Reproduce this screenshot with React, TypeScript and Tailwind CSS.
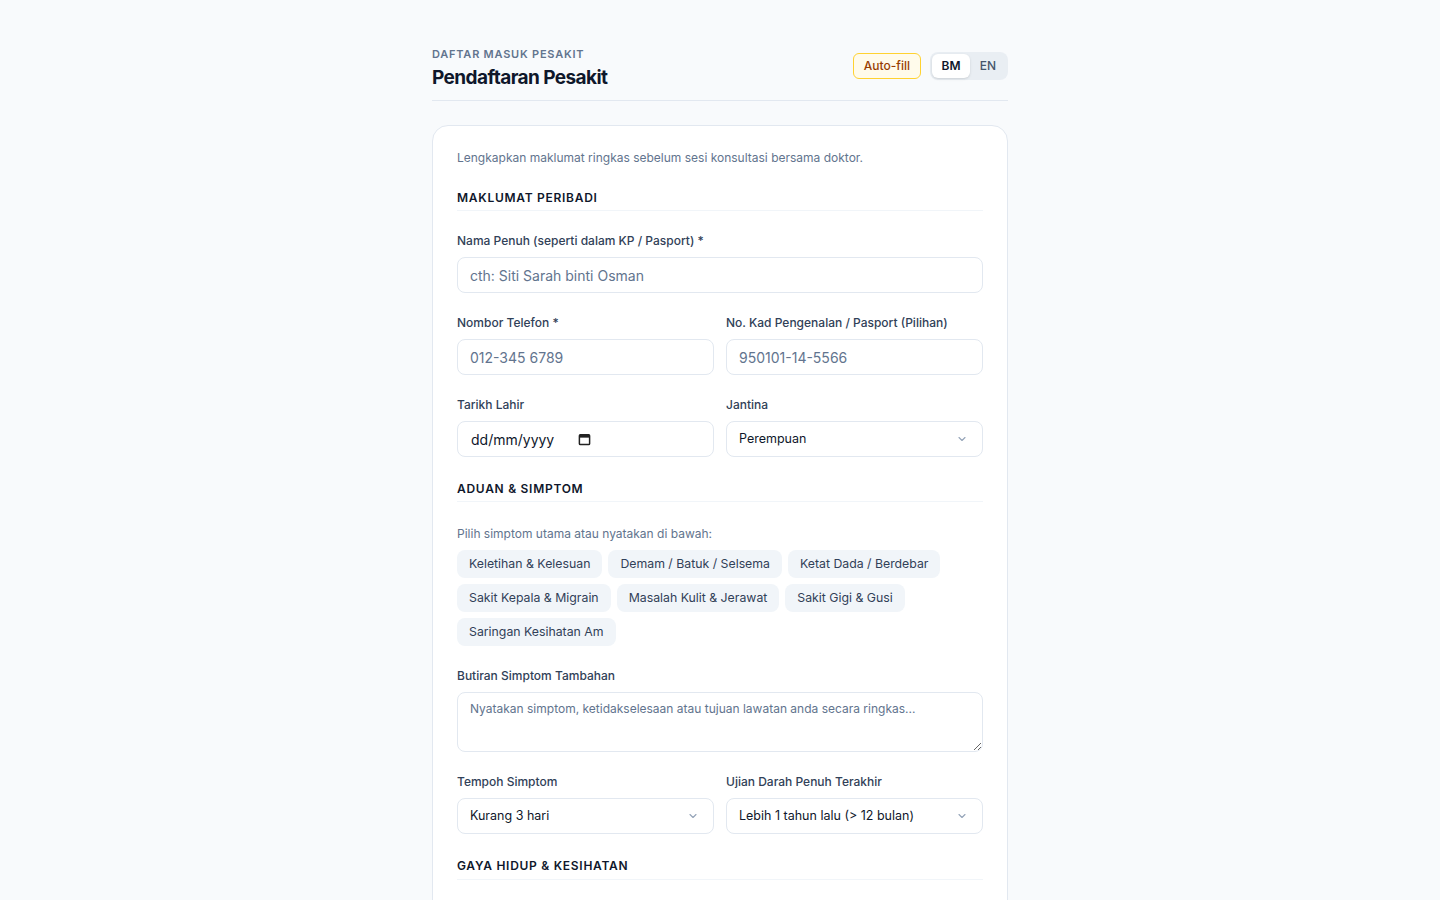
import React from "react";

const font = { fontFamily: "Inter, 'Noto Sans', sans-serif" };

function Label({ children }: { children: React.ReactNode }) {
  return <label className="block text-[12px] leading-4 font-medium text-slate-700 mb-2">{children}</label>;
}

function TextInput({ placeholder }: { placeholder: string }) {
  return (
    <input
      type="text"
      placeholder={placeholder}
      className="block w-full h-9 rounded-lg border border-slate-200 bg-white px-3 text-[14px] text-slate-900 placeholder:text-slate-500 outline-none"
      style={font}
    />
  );
}

function Chevron() {
  return (
    <svg className="pointer-events-none absolute right-[15px] top-1/2 -translate-y-1/2" width="12" height="12" viewBox="0 0 24 24" fill="none" stroke="#94a3b8" strokeWidth="2.2" strokeLinecap="round" strokeLinejoin="round">
      <path d="M6 9l6 6 6-6" />
    </svg>
  );
}

function Select({ value, options }: { value: string; options: string[] }) {
  return (
    <div className="relative">
      <select
        defaultValue={value}
        className="block w-full h-9 appearance-none rounded-lg border border-slate-200 bg-white pl-3 pr-8 text-[12.5px] text-slate-900 outline-none"
        style={font}
      >
        {options.map((o) => (
          <option key={o}>{o}</option>
        ))}
      </select>
      <Chevron />
    </div>
  );
}

function SectionTitle({ children }: { children: React.ReactNode }) {
  return (
    <div className="border-b border-slate-100 pb-[4px] text-[12px] leading-4 font-semibold tracking-[0.06em] text-slate-900 uppercase">
      {children}
    </div>
  );
}

const chips = [
  "Keletihan & Kelesuan",
  "Demam / Batuk / Selsema",
  "Ketat Dada / Berdebar",
  "Sakit Kepala & Migrain",
  "Masalah Kulit & Jerawat",
  "Sakit Gigi & Gusi",
  "Saringan Kesihatan Am",
];

export default function App() {
  return (
    <div className="min-h-screen bg-slate-50" style={font}>
      <div className="mx-auto w-[576px] pt-[46px] pb-16">
        <header className="flex items-start justify-between border-b border-slate-200 pb-2">
          <div>
            <div className="text-[11px] leading-4 font-semibold tracking-[0.07em] text-slate-500 uppercase">Daftar Masuk Pesakit</div>
            <h1 className="mt-0.5 text-[19px] leading-7 font-bold tracking-[-0.03em] text-slate-900">Pendaftaran Pesakit</h1>
          </div>
          <div className="mt-[6px] flex items-center gap-[9px]">
            <button className="h-[26px] rounded-md border border-amber-300 bg-amber-50 px-[10px] text-[12px] font-medium text-amber-800">Auto-fill</button>
            <div className="flex rounded-lg bg-slate-200/70 p-[2px]">
              <button className="h-6 w-[38px] rounded-md bg-white text-[12px] font-semibold text-slate-900 shadow-sm">BM</button>
              <button className="h-6 w-[36px] rounded-md text-[12px] font-medium text-slate-600">EN</button>
            </div>
          </div>
        </header>

        <main className="mt-6 rounded-2xl border border-slate-200 bg-white p-6">
          <p className="text-[12px] leading-4 text-slate-500">Lengkapkan maklumat ringkas sebelum sesi konsultasi bersama doktor.</p>

          <section className="mt-6">
            <SectionTitle>Maklumat Peribadi</SectionTitle>
            <div className="mt-[22px]">
              <Label>Nama Penuh (seperti dalam KP / Pasport) *</Label>
              <TextInput placeholder="cth: Siti Sarah binti Osman" />
            </div>
            <div className="mt-[22px] grid grid-cols-2 gap-3">
              <div>
                <Label>Nombor Telefon *</Label>
                <TextInput placeholder="012-345 6789" />
              </div>
              <div>
                <Label>No. Kad Pengenalan / Pasport (Pilihan)</Label>
                <TextInput placeholder="950101-14-5566" />
              </div>
            </div>
            <div className="mt-[22px] grid grid-cols-2 gap-3">
              <div>
                <Label>Tarikh Lahir</Label>
                <div className="flex h-9 items-center rounded-lg border border-slate-200 bg-white px-[13px] text-[14px] text-slate-900">
                  <span>dd/mm/yyyy</span>
                  <svg className="ml-[24px]" width="13" height="13" viewBox="0 0 14 14">
                    <rect x="1.5" y="2" width="11" height="10.5" rx="1" fill="none" stroke="#222" strokeWidth="1.6" />
                    <rect x="1.5" y="2" width="11" height="3" fill="#222" />
                  </svg>
                </div>
              </div>
              <div>
                <Label>Jantina</Label>
                <Select value="Perempuan" options={["Lelaki", "Perempuan"]} />
              </div>
            </div>
          </section>

          <section className="mt-[24px]">
            <SectionTitle>Aduan &amp; Simptom</SectionTitle>
            <p className="mt-6 text-[12px] leading-4 text-slate-500">Pilih simptom utama atau nyatakan di bawah:</p>
            <div className="mt-[8px] flex flex-wrap gap-x-[6px] gap-y-[6px]">
              {chips.map((c) => (
                <button key={c} className="h-7 rounded-lg bg-slate-100 px-3 text-[12.3px] font-normal text-slate-700">
                  {c}
                </button>
              ))}
            </div>
            <div className="mt-[22px]">
              <Label>Butiran Simptom Tambahan</Label>
              <textarea
                rows={2}
                placeholder="Nyatakan simptom, ketidakselesaan atau tujuan lawatan anda secara ringkas..."
                className="block h-[60px] w-full rounded-lg border border-slate-200 bg-white px-3 py-[8px] text-[12px] leading-4 text-slate-900 placeholder:text-slate-500 outline-none"
                style={font}
              />
            </div>
            <div className="mt-[22px] grid grid-cols-2 gap-3">
              <div>
                <Label>Tempoh Simptom</Label>
                <Select value="Kurang 3 hari" options={["Kurang 3 hari", "3 - 7 hari", "Lebih 1 minggu"]} />
              </div>
              <div>
                <Label>Ujian Darah Penuh Terakhir</Label>
                <Select
                  value="Lebih 1 tahun lalu (> 12 bulan)"
                  options={["Kurang 6 bulan", "6 - 12 bulan", "Lebih 1 tahun lalu (> 12 bulan)"]}
                />
              </div>
            </div>
          </section>

          <section className="mt-[24px]">
            <div className="border-b border-slate-100 pb-[5px] text-[12px] leading-4 font-semibold tracking-[0.06em] text-slate-900 uppercase">
              Gaya Hidup &amp; Kesihatan
            </div>
            <div className="mt-[24px] grid grid-cols-2 gap-3">
              <div>
                <Label>Status Merokok</Label>
                <Select value="Tidak merokok" options={["Tidak merokok", "Merokok"]} />
              </div>
              <div>
                <Label>Aktiviti Fizikal</Label>
                <Select value="Sederhana" options={["Rendah", "Sederhana", "Tinggi"]} />
              </div>
            </div>
          </section>
        </main>
      </div>
    </div>
  );
}
